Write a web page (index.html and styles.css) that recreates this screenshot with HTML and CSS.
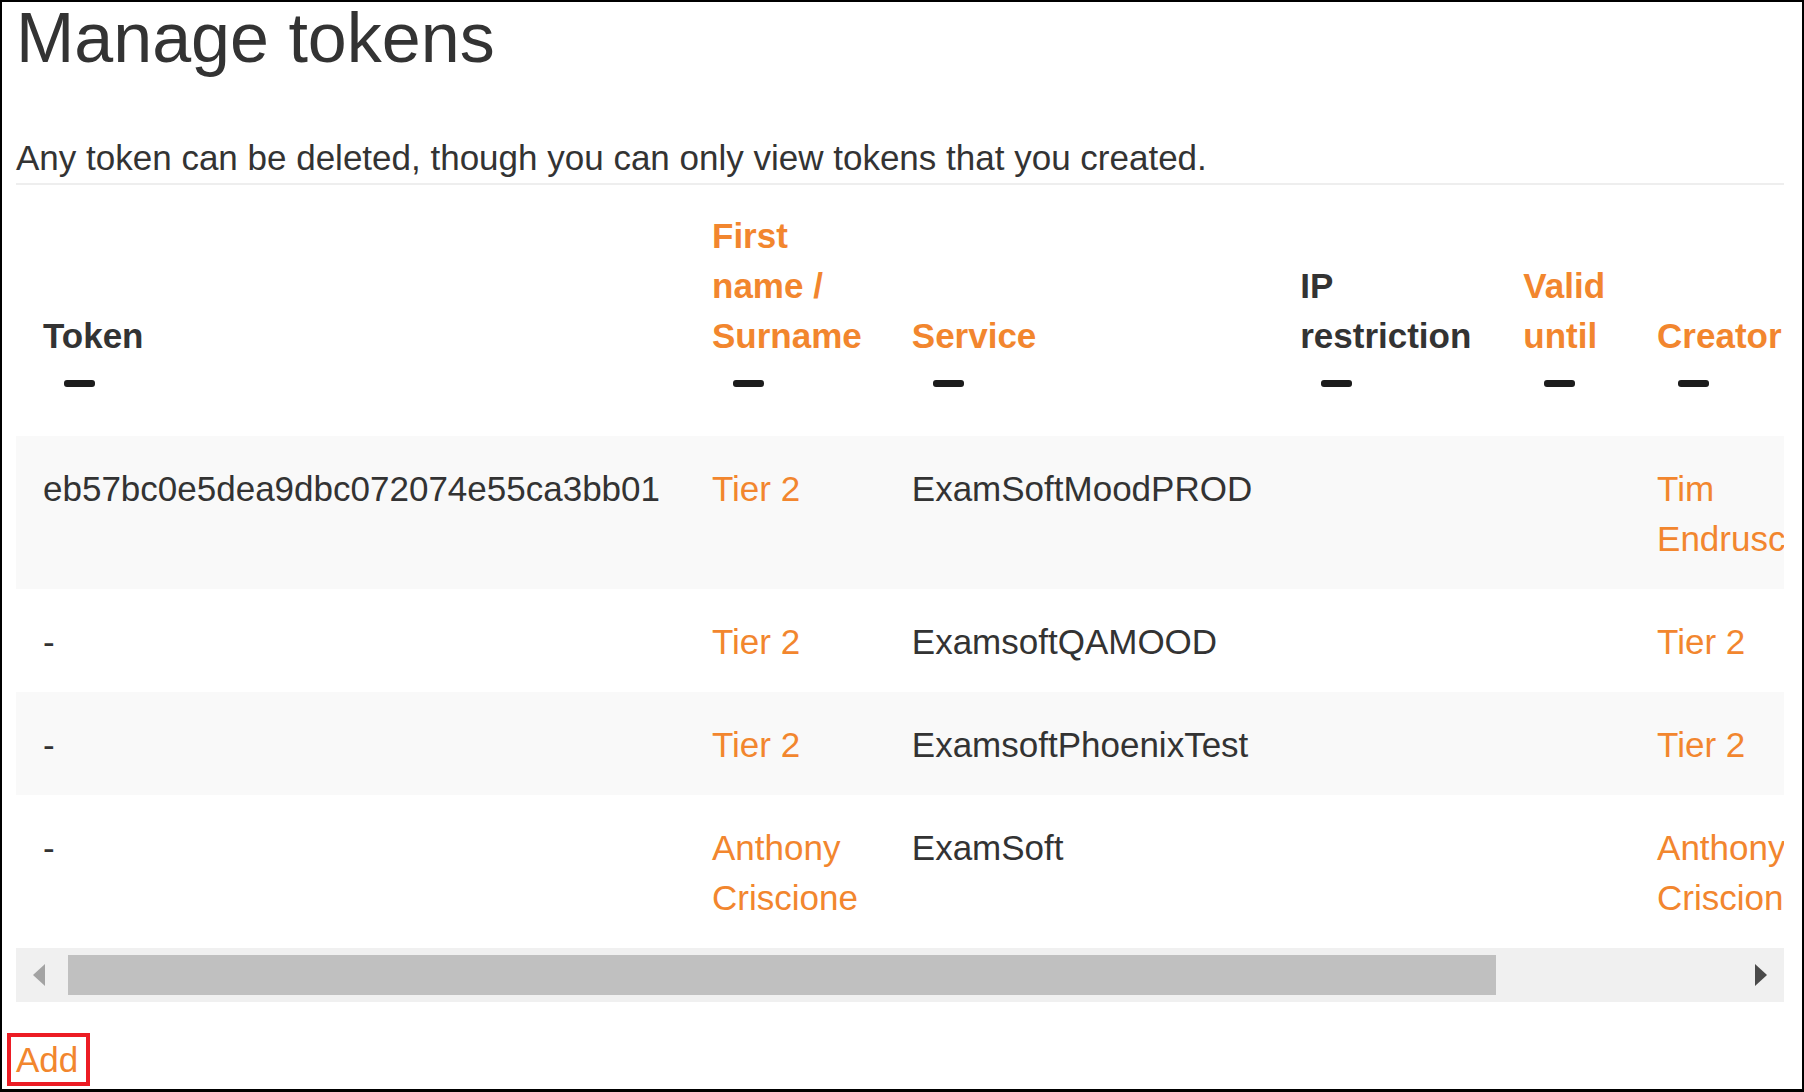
FILE: index.html
```html
<!DOCTYPE html>
<html lang="en">
<head>
<meta charset="utf-8">
<title>Manage tokens</title>
<link rel="stylesheet" href="styles.css">
</head>
<body>
<div class="page">
  <h2 class="title">Manage tokens</h2>
  <p class="intro">Any token can be deleted, though you can only view tokens that you created.</p>
  <div class="scroller">
    <div class="viewport">
      <table class="tokens">
        <thead>
          <tr>
            <th><span class="plain">Token</span><span class="sort"></span></th>
            <th><a href="#">First name / Surname</a><span class="sort"></span></th>
            <th class="col-service"><a href="#">Service</a><span class="sort"></span></th>
            <th><span class="plain">IP restriction</span><span class="sort"></span></th>
            <th><a href="#">Valid until</a><span class="sort"></span></th>
            <th><a href="#">Creator</a><span class="sort"></span></th>
            <th><span class="plain">Edit</span><span class="sort"></span></th>
          </tr>
        </thead>
        <tbody>
          <tr class="odd">
            <td>eb57bc0e5dea9dbc072074e55ca3bb01</td>
            <td><a href="#">Tier 2</a></td>
            <td class="col-service">ExamSoftMoodPROD</td>
            <td></td>
            <td></td>
            <td><a href="#">Tim Endruschat</a></td>
            <td><a href="#">Delete</a></td>
          </tr>
          <tr>
            <td>-</td>
            <td><a href="#">Tier 2</a></td>
            <td class="col-service">ExamsoftQAMOOD</td>
            <td></td>
            <td></td>
            <td><a href="#">Tier 2</a></td>
            <td><a href="#">Delete</a></td>
          </tr>
          <tr class="odd">
            <td>-</td>
            <td><a href="#">Tier 2</a></td>
            <td class="col-service">ExamsoftPhoenixTest</td>
            <td></td>
            <td></td>
            <td><a href="#">Tier 2</a></td>
            <td><a href="#">Delete</a></td>
          </tr>
          <tr>
            <td>-</td>
            <td><a href="#">Anthony Criscione</a></td>
            <td class="col-service">ExamSoft</td>
            <td></td>
            <td></td>
            <td><a href="#">Anthony Criscione</a></td>
            <td><a href="#">Delete</a></td>
          </tr>
        </tbody>
      </table>
    </div>
    <div class="hbar">
      <div class="hbar-btn"><span class="arrow arrow-left"></span></div>
      <div class="hbar-thumb"></div>
      <div class="hbar-track"></div>
      <div class="hbar-btn"><span class="arrow arrow-right"></span></div>
    </div>
  </div>
  <div class="actions"><a class="add" href="#">Add</a></div>
</div>
</body>
</html>
```

FILE: styles.css
```css
* {
  box-sizing: border-box;
}

html, body {
  margin: 0;
  padding: 0;
  background: #ffffff;
}

body {
  font-family: "Liberation Sans", Arial, sans-serif;
  color: #333333;
  font-size: 35px;
  line-height: 50px;
}

a {
  color: #f2862e;
  text-decoration: none;
}

.page {
  width: 1804px;
  height: 1092px;
  border: 2px solid #000000;
  border-bottom-width: 3px;
  padding: 0 18px 0 14px;
  overflow: hidden;
}

.title {
  margin: 1px 0 0 0;
  font-size: 70px;
  line-height: 70px;
  font-weight: normal;
  color: #333333;
}

.intro {
  margin: 60px 0 0 0;
  font-size: 35px;
  line-height: 50px;
}

.scroller {
  border-top: 2px solid #eeeeee;
}

.viewport {
  overflow: hidden;
  width: 100%;
}

.tokens {
  width: 100%;
  border-collapse: collapse;
  border-spacing: 0;
}

.tokens th,
.tokens td {
  padding: 28px 26px 25px 26px;
  text-align: left;
  line-height: 50px;
}

.tokens th:first-child,
.tokens td:first-child {
  padding-left: 27px;
}

.tokens .col-service {
  padding-left: 24px;
  padding-right: 22px;
}

.tokens th {
  vertical-align: bottom;
  font-weight: bold;
  padding-top: 26px;
  padding-bottom: 25px;
}

.tokens th .plain {
  color: #333333;
}

.tokens td {
  vertical-align: top;
}

.tokens tr.odd td {
  background: #f9f9f9;
}

.sort {
  display: block;
  width: 31px;
  height: 7px;
  margin: 19px 0 24px 21px;
  background: #1c1c1c;
  border-radius: 3px;
}

.hbar {
  display: flex;
  height: 54px;
  background: #f0f0f0;
  align-items: stretch;
}

.hbar-btn {
  width: 50px;
  flex: 0 0 50px;
  display: flex;
  align-items: center;
  justify-content: center;
}

.hbar-thumb {
  flex: 0 0 1428px;
  margin: 7px 0 7px 2px;
  background: #c0c0c0;
}

.hbar-track {
  flex: 1 1 auto;
}

.arrow {
  width: 0;
  height: 0;
  border-top: 11px solid transparent;
  border-bottom: 11px solid transparent;
}

.arrow-left {
  border-right: 12px solid #a3a3a3;
  margin-right: 4px;
}

.arrow-right {
  border-left: 12px solid #4a4a4a;
  margin-left: 4px;
}

.actions {
  margin-top: 31px;
}

.add {
  display: inline-block;
  margin-left: -9px;
  border: 4px solid #ec1c24;
  padding: 0 8px 0 5px;
  line-height: 45px;
  font-size: 35px;
  color: #f2862e;
}
```
